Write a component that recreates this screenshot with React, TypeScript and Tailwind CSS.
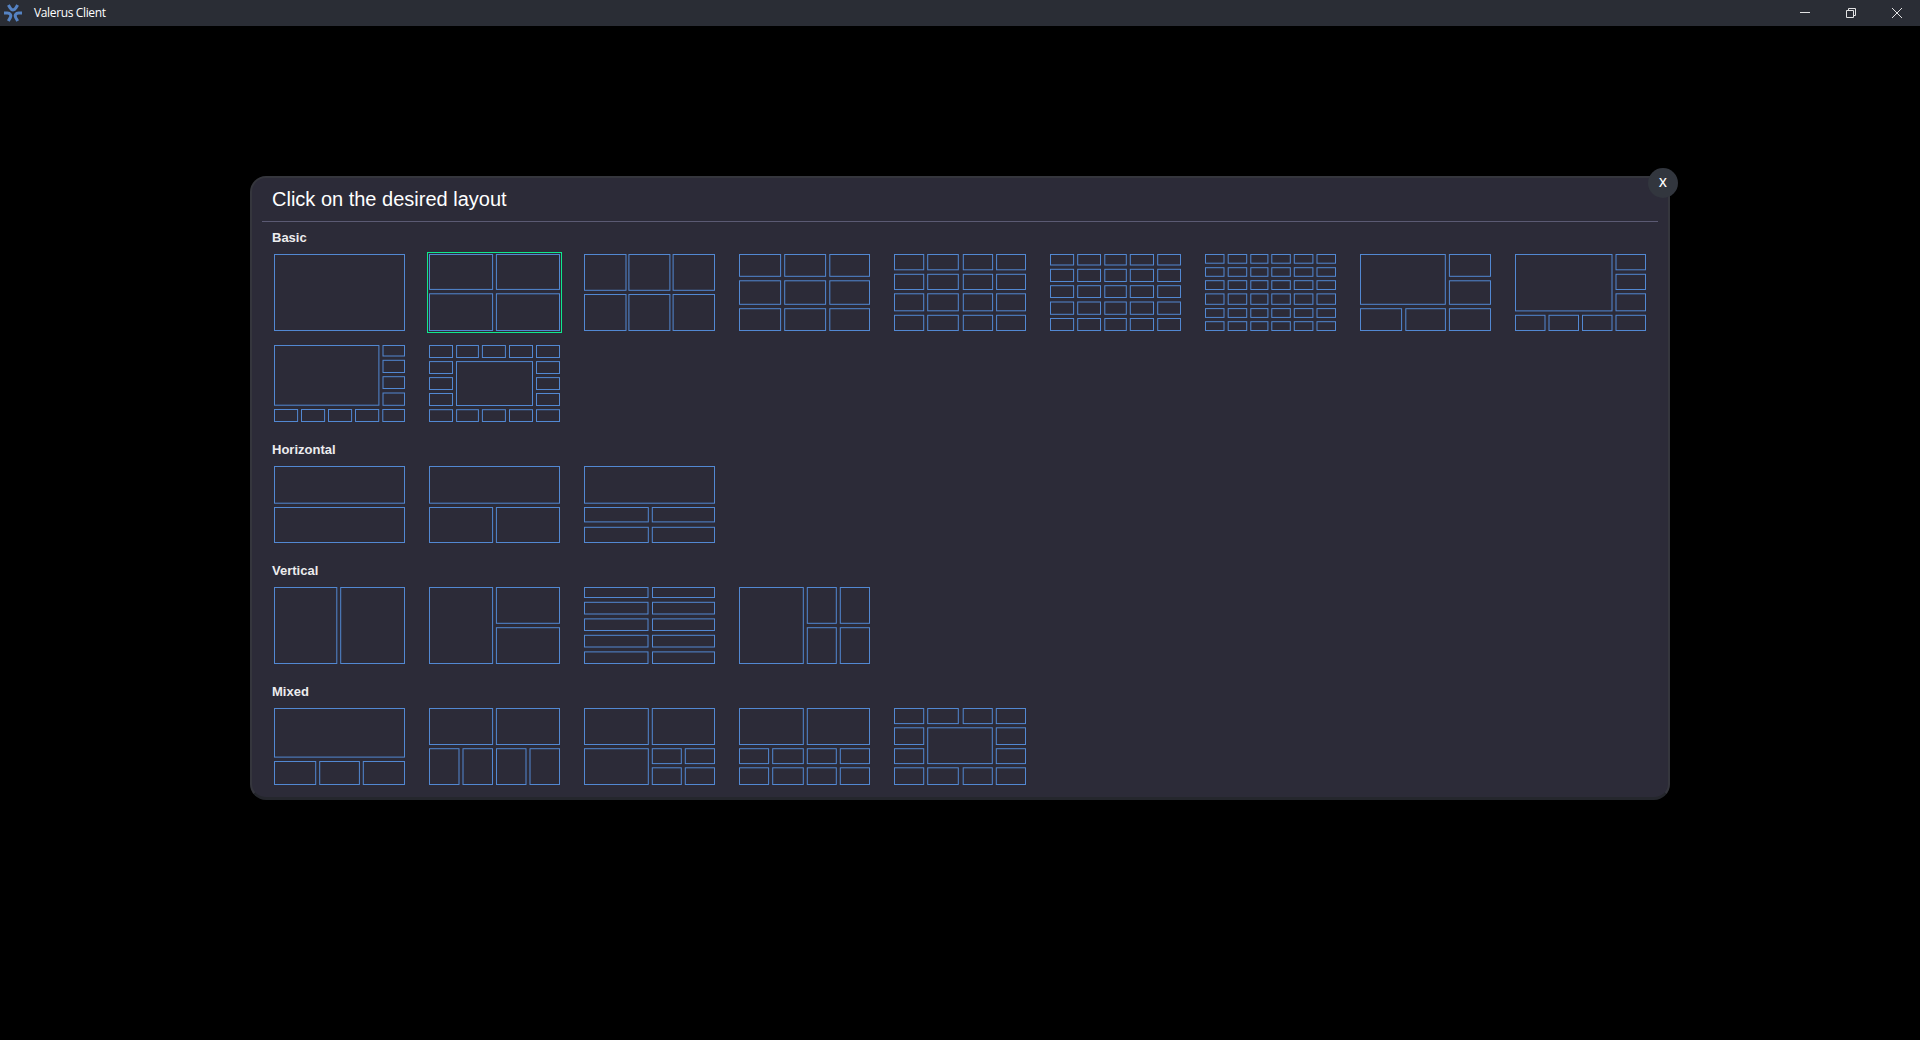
import { useState } from "react";

type Span = [number, number];
type Cell = [x1: number, y1: number, x2: number, y2: number];

interface Layout {
  id: string;
  width?: number;
  cells: Cell[];
}

const HEIGHT = 77;

/** Every combination of the given columns and rows. */
const grid = (cols: Span[], rows: Span[]): Cell[] =>
  rows.flatMap(([y1, y2]) => cols.map(([x1, x2]): Cell => [x1, y1, x2, y2]));

const full: Span[] = [[0, 131]];
const halves: Span[] = [[0, 64.1], [66.9, 131]];
const wideHalves: Span[] = [[0, 64.8], [67.8, 131]];
const rowHalves: Span[] = [[0, 36.8], [40.2, 77]];

const rows3: Span[] = [[0, 22.8], [26.3, 50.8], [54.2, 77]];
const rows4: Span[] = [[0, 16.3], [19.8, 36], [39.3, 57.3], [60.8, 77]];
const rows5: Span[] = [[0, 11.5], [14.8, 28], [31.2, 44], [47.5, 60.8], [64, 77]];
const cols4: Span[] = [[0, 30.2], [33.2, 64.8], [68.8, 99.1], [102.1, 132]];
const quarter: Span[] = [[0, 30.5], [33.5, 64], [67, 97.5], [100.5, 131]];
const ringCols: Span[] = [[0, 24], [27.1, 49.9], [52.9, 76.9], [80, 104], [107, 131]];
const ringRows: Span[] = [[0, 13], [16.1, 29], [32.1, 45], [48, 61], [64.2, 77]];
const mixRows4: Span[] = [[0, 16.1], [19.3, 37], [40.2, 56.1], [59.3, 77]];
const mixCols4: Span[] = [[0, 30.2], [33.2, 64.8], [68.7, 98.8], [101.8, 132]];

const sections: { title: string; layouts: Layout[] }[] = [
  {
    title: "Basic",
    layouts: [
      { id: "b1", cells: grid(full, [[0, 77]]) },
      { id: "b4", cells: grid(halves, [[0, 35.9], [39.3, 77]]) },
      { id: "b6", cells: grid([[0, 42.5], [44.4, 86.4], [88.6, 131]], [[0, 36.8], [40, 77]]) },
      { id: "b9", cells: grid([[0, 42.1], [45.2, 87.1], [90.3, 131]], rows3) },
      { id: "b16", width: 132, cells: grid(cols4, rows4) },
      {
        id: "b25",
        cells: grid([[0, 24.1], [27.2, 51], [54.3, 76.8], [79.8, 104], [107.2, 131]], rows5),
      },
      {
        id: "b36",
        cells: grid(
          [[0, 19.5], [22.7, 42.2], [45.3, 63.4], [66.3, 85.8], [88.8, 108.4], [111.5, 131]],
          [[0, 9.7], [13.2, 22.8], [26.2, 36], [39.4, 50.8], [54.1, 63.9], [67.2, 77]],
        ),
      },
      {
        id: "b1-5",
        cells: [
          [0, 0, 85.8, 50.8],
          ...grid([[88.9, 131]], rows3.slice(0, 2)),
          ...grid([[0, 42.1], [45.3, 85.9], [88.9, 131]], rows3.slice(2)),
        ],
      },
      {
        id: "b1-7",
        cells: [
          [0, 0, 97.5, 57.4],
          ...grid([[100.5, 131]], rows4.slice(0, 3)),
          ...grid(quarter, rows4.slice(3)),
        ],
      },
      {
        id: "b1-9",
        cells: [
          [0, 0, 105.4, 60.7],
          ...grid([[108.5, 131]], rows5.slice(0, 4)),
          ...grid([[0, 24.1], [27, 51.1], [54, 78.1], [81, 105.2], [108.3, 131]], rows5.slice(4)),
        ],
      },
      {
        id: "b1-16",
        cells: [
          ...grid(ringCols, ringRows.slice(0, 1)),
          ...grid([ringCols[0], ringCols[4]], ringRows.slice(1, 4)),
          [27, 16.1, 104, 61],
          ...grid(ringCols, ringRows.slice(4)),
        ],
      },
    ],
  },
  {
    title: "Horizontal",
    layouts: [
      { id: "h2", cells: grid(full, [[0, 37.7], [41, 77]]) },
      { id: "h1-2", cells: [[0, 0, 131, 37.7], ...grid(halves, [[41, 77]])] },
      { id: "h1-4", cells: [[0, 0, 131, 37.7], ...grid(wideHalves, [[41, 56.4], [60.8, 77]])] },
    ],
  },
  {
    title: "Vertical",
    layouts: [
      { id: "v2", cells: grid([[0, 63.3], [66.2, 131]], [[0, 77]]) },
      { id: "v1-2", cells: [[0, 0, 64.1, 77], ...grid([[66.9, 131]], rowHalves)] },
      {
        id: "v10",
        cells: grid(
          [[0, 64.5], [68, 131]],
          [[0, 11], [14.8, 27.5], [31.4, 44], [47.8, 60.5], [64.4, 77]],
        ),
      },
      {
        id: "v1-4",
        cells: [[0, 0, 64.8, 77], ...grid([[67.8, 97.8], [100.8, 131]], rowHalves)],
      },
    ],
  },
  {
    title: "Mixed",
    layouts: [
      {
        id: "m1-3",
        cells: [
          [0, 0, 131, 49.6],
          ...grid([[0, 42.2], [45.2, 85.9], [88.8, 131]], [[53, 77]]),
        ],
      },
      { id: "m2-4", cells: [...grid(halves, [[0, 37]]), ...grid(quarter, [[40.2, 77]])] },
      {
        id: "m3-4",
        cells: [
          ...grid(wideHalves, [[0, 37]]),
          [0, 40.2, 64.8, 77],
          ...grid([[67.8, 97.8], [100.8, 131]], mixRows4.slice(2)),
        ],
      },
      {
        id: "m2-8",
        cells: [
          ...grid(wideHalves, [[0, 37]]),
          ...grid([[0, 30.1], [33.2, 64.8], [67.8, 97.8], [100.8, 131]], mixRows4.slice(2)),
        ],
      },
      {
        id: "m1-12",
        width: 132,
        cells: [
          ...grid(mixCols4, mixRows4.slice(0, 1)),
          ...grid([mixCols4[0], mixCols4[3]], mixRows4.slice(1, 3)),
          [33.2, 19.3, 98.8, 56.1],
          ...grid(mixCols4, mixRows4.slice(3)),
        ],
      },
    ],
  },
];

function LayoutIcon({ layout }: { layout: Layout }) {
  const width = layout.width ?? 131;
  return (
    <svg width={width} height={HEIGHT} className="block" fill="none" stroke="#5288d2">
      {layout.cells.map(([x1, y1, x2, y2], i) => (
        <rect key={i} x={x1 + 0.5} y={y1 + 0.5} width={x2 - x1 - 1} height={y2 - y1 - 1} />
      ))}
    </svg>
  );
}

function Logo() {
  const arm = "M4.4 .9 6.2 4.1Q7.3 6 9 6T11.8 4.1L13.6 .9";
  return (
    <svg width="18" height="18" viewBox="0 0 18 18" fill="none" stroke="#5583c4" strokeWidth="3">
      <path d={arm} />
      <path d={arm} transform="rotate(120 9 9)" />
      <path d={arm} transform="rotate(240 9 9)" />
    </svg>
  );
}

function TitleBar() {
  return (
    <header className="flex h-[26px] items-center bg-[#2a2d35] pl-1">
      <Logo />
      <span className="ml-3 font-['Open_Sans',sans-serif] text-[12px] leading-none tracking-[-0.36px] text-white">
        Valerus Client
      </span>
      <div className="ml-auto flex h-full text-[#e2e2e3]">
        <button className="flex w-[46px] items-center justify-center" aria-label="Minimize">
          <svg width="10" height="10" shapeRendering="crispEdges" fill="currentColor">
            <rect y="4" width="10" height="1" />
          </svg>
        </button>
        <button className="flex w-[46px] items-center justify-center" aria-label="Restore">
          <svg width="10" height="10" fill="none" stroke="currentColor">
            <path d="M.5 2.5h7v7h-7zM2.5 2.5v-2h7v7h-2" />
          </svg>
        </button>
        <button className="flex w-[46px] items-center justify-center" aria-label="Close">
          <svg width="10" height="10" fill="none" stroke="currentColor">
            <path d="M0 0 10 10M10 0 0 10" />
          </svg>
        </button>
      </div>
    </header>
  );
}

export default function App() {
  const [selected, setSelected] = useState("b4");

  return (
    <div className="flex h-[1040px] w-[1920px] flex-col overflow-hidden bg-black font-['Liberation_Sans',Arial,sans-serif]">
      <TitleBar />
      <main className="flex flex-1 items-start justify-center pt-[150px]">
        <section className="relative h-[624px] w-[1420px] rounded-[16px] border-2 border-b-[3px] border-[#35363d] border-b-[#25272d] bg-[#2c2b38] px-2.5">
          <h1 className="h-11 border-b border-[#5b5a73] pl-2.5 text-[20px] leading-[42px] text-white">
            Click on the desired layout
          </h1>
          <div className="flex flex-col gap-5 pt-2 pl-2.5">
            {sections.map((section) => (
              <div key={section.title}>
                <h2 className="h-6 text-[13px] leading-[16px] font-bold text-[#ececee]">
                  {section.title}
                </h2>
                <div className="flex flex-wrap gap-x-6 gap-y-3.5 pl-0.5">
                  {section.layouts.map((layout) => (
                    <button
                      key={layout.id}
                      onClick={() => setSelected(layout.id)}
                      className={
                        layout.id === selected
                          ? "outline outline-offset-1 outline-[#0fe88d]"
                          : "outline-none"
                      }
                    >
                      <LayoutIcon layout={layout} />
                    </button>
                  ))}
                </div>
              </div>
            ))}
          </div>
          <button className="absolute -top-2.5 -right-2.5 flex size-[30px] items-center justify-center rounded-full bg-[#32363e] pt-px font-['Open_Sans',sans-serif] text-[12.5px] leading-none font-semibold text-white">
            X
          </button>
        </section>
      </main>
    </div>
  );
}
